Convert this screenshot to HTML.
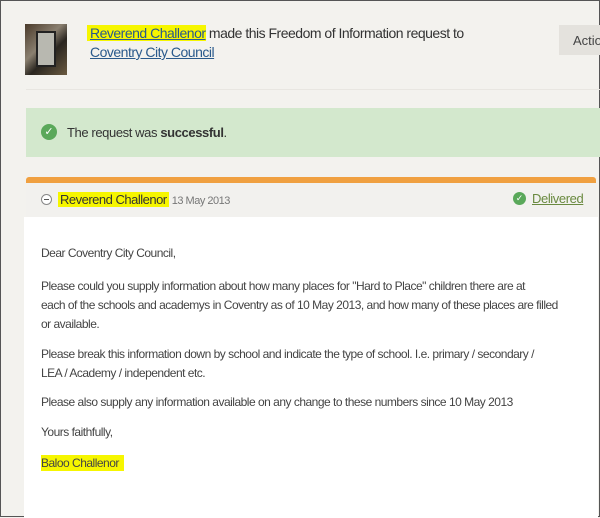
<!DOCTYPE html>
<html><head><style>
*{margin:0;padding:0;box-sizing:border-box}
body{width:600px;height:517px;overflow:hidden;background:#f3f2ee;font-family:"Liberation Sans",sans-serif;position:relative;border:1px solid #555;color:#333}
.a{position:absolute;white-space:nowrap}
.hl{background:#f6f600}
a{color:#2a5a8c;text-decoration:underline}
.t{font-size:12px;letter-spacing:-0.5px;color:#444}
</style></head><body>
<div class="a" style="left:24px;top:23px;width:42px;height:51px;background:linear-gradient(135deg,#4a3a2a,#8a8070 40%,#2a2620 60%,#6a5a40)"></div>
<div class="a" style="left:35px;top:30px;width:20px;height:36px;background:#b8b8b0;border:2px solid #222"></div>
<div class="a" style="left:86px;top:24px;font-size:14px;letter-spacing:-0.5px"><span class="hl" style="padding-left:3px"><a>Reverend Challenor</a></span> made this Freedom of Information request to</div>
<div class="a" style="left:89px;top:43px;font-size:14px;letter-spacing:-0.5px"><a>Coventry City Council</a></div>
<div class="a" style="left:558px;top:24px;width:42px;height:30px;background:#e4e2dd;font-size:13px;padding:8px 0 0 14px;color:#444">Actio</div>
<div class="a" style="left:25px;top:88px;width:575px;height:1px;background:#e8e6e1"></div>
<div class="a" style="left:25px;top:107px;width:575px;height:49px;background:#d3e8cd"></div>
<div class="a" style="left:40px;top:123px;width:16px;height:16px;border-radius:50%;background:#5aa85a;color:#fff;font-size:11px;text-align:center;line-height:16px">✓</div>
<div class="a" style="left:66px;top:124px;font-size:13px;letter-spacing:-0.4px">The request was <b>successful</b>.</div>
<div class="a" style="left:25px;top:176px;width:570px;height:6px;background:#f0a040;border-radius:3px 3px 0 0"></div>
<div class="a" style="left:25px;top:182px;width:570px;height:34px;background:#f2f1ee"></div>
<div class="a" style="left:40px;top:193px;width:11px;height:11px;border-radius:50%;border:1px solid #888;background:#fff"></div>
<div class="a" style="left:43px;top:198px;width:5px;height:1px;background:#555"></div>
<div class="a" style="left:57px;top:191px;font-size:13px;letter-spacing:-0.5px"><span class="hl" style="padding:0 2px">Reverend Challenor</span> <span style="font-size:11px;color:#777">13 May 2013</span></div>
<div class="a" style="left:512px;top:191px;width:13px;height:13px;border-radius:50%;background:#5aa85a;color:#fff;font-size:9px;text-align:center;line-height:13px">✓</div>
<div class="a" style="left:531px;top:190px;font-size:13px;letter-spacing:-0.4px;color:#6a8a40;text-decoration:underline">Delivered</div>
<div class="a" style="left:23px;top:216px;width:574px;height:301px;background:#fff"></div>
<div class="a t" style="left:40px;top:245px">Dear Coventry City Council,</div>
<div class="a t" style="left:40px;top:276px;line-height:19px">Please could you supply information about how many places for "Hard to Place" children there are at<br>each of the schools and academys in Coventry as of 10 May 2013, and how many of these places are filled<br>or available.</div>
<div class="a t" style="left:40px;top:344px;line-height:19px">Please break this information down by school and indicate the type of school. I.e. primary / secondary /<br>LEA / Academy / independent etc.</div>
<div class="a t" style="left:40px;top:394px">Please also supply any information available on any change to these numbers since 10 May 2013</div>
<div class="a t" style="left:40px;top:424px">Yours faithfully,</div>
<div class="a t" style="left:40px;top:455px"><span class="hl" style="padding:1px 5px 1px 0">Baloo Challenor</span></div>
</body></html>
